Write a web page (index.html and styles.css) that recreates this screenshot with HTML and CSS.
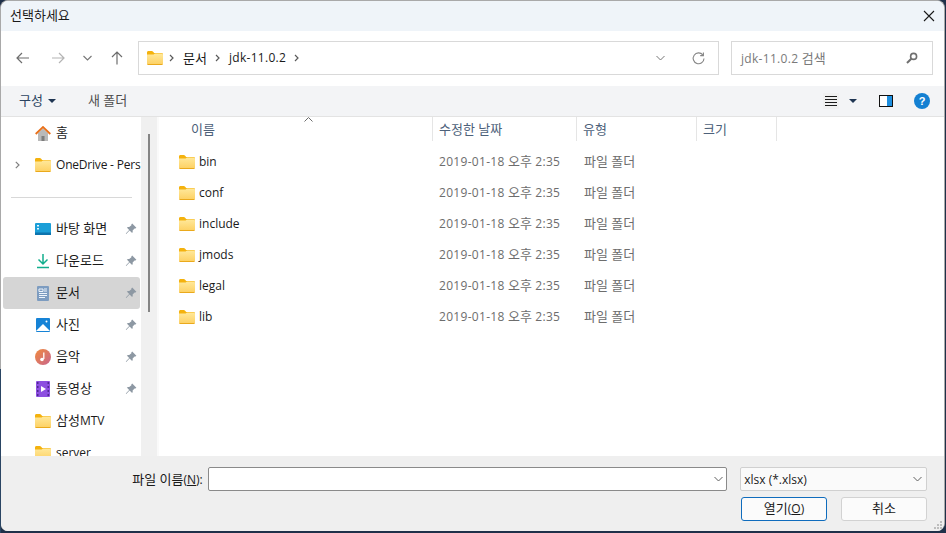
FILE: index.html
```html
<!DOCTYPE html>
<html lang="ko">
<head>
<meta charset="utf-8">
<title>선택하세요</title>
<link rel="stylesheet" href="styles.css">
</head>
<body>
<svg class="defs" width="0" height="0">
  <defs>
    <linearGradient id="fg" x1="0" y1="0" x2="0" y2="1"><stop offset="0" stop-color="#ffe89a"/><stop offset="1" stop-color="#fdd061"/></linearGradient>
    <symbol id="folder" viewBox="0 0 16 14">
      <path d="M0 1.500C0 .7.6 0 1.400 0h3.400c.5 0 .8.2 1.100.5L7.200 2H14.600c.8 0 1.400.6 1.400 1.400V6H0z" fill="#f4b20e"/>
      <path d="M0 3.400h6.600L8 2.600h6.600c.8 0 1.400.6 1.400 1.400v8.600c0 .8-.6 1.400-1.400 1.400H1.400C.6 14 0 13.400 0 12.600z" fill="url(#fg)"/>
      <path d="M0 13h16v-.4c0 .8-.6 1.400-1.400 1.400H1.400C.6 14 0 13.400 0 12.600z" fill="#eaa91c"/>
    </symbol>
    <symbol id="pin" viewBox="0 0 12 12">
      <path d="M7.200.6l4.200 4.200-1 .8-.8-.2L7.600 7.600c.3 1 .1 1.800-.5 2.400L4.600 7.400 1.200 11l-.4-.4 3.400-3.600L1.800 4.600c.6-.6 1.500-.8 2.400-.5L6.400 2.200l-.1-.8z" fill="#8d98a3"/>
    </symbol>
  </defs>
</svg>
<main class="dialog">
  <header class="titlebar">
    <span class="title">선택하세요</span>
    <svg class="close" width="12" height="12" viewBox="0 0 12 12"><path d="M1 1l10 10M11 1L1 11" stroke="#1a1a1a" stroke-width="1.100" fill="none"/></svg>
  </header>

  <nav class="navbar">
    <div class="navbtns">
      <svg width="14" height="12" viewBox="0 0 14 12"><path d="M13 6H1.200M6 1L1 6l5 5" stroke="#6d6d6d" stroke-width="1.200" fill="none"/></svg>
      <svg class="nav-fwd" width="14" height="12" viewBox="0 0 14 12"><path d="M1 6h11.800M8 1l5 5-5 5" stroke="#b4b4b4" stroke-width="1.200" fill="none"/></svg>
      <svg class="nav-down" width="9" height="6" viewBox="0 0 9 6"><path d="M.5 1l4 4 4-4" stroke="#767676" stroke-width="1.100" fill="none"/></svg>
      <svg class="nav-up" width="12" height="14" viewBox="0 0 12 14"><path d="M6 13.500V1.200M1 6l5-5 5 5" stroke="#6d6d6d" stroke-width="1.200" fill="none"/></svg>
    </div>
    <div class="address">
      <svg class="addr-folder" width="16" height="14"><use href="#folder"/></svg>
      <svg class="crumb-sep first-sep" width="5" height="8" viewBox="0 0 5 8"><path d="M1 1l3 3-3 3" stroke="#5a5a5a" stroke-width="1.200" fill="none"/></svg>
      <span class="crumb">문서</span>
      <svg class="crumb-sep" width="5" height="8" viewBox="0 0 5 8"><path d="M1 1l3 3-3 3" stroke="#5a5a5a" stroke-width="1.200" fill="none"/></svg>
      <span class="crumb en wide">jdk-11.0.2</span>
      <svg class="crumb-sep" width="5" height="8" viewBox="0 0 5 8"><path d="M1 1l3 3-3 3" stroke="#5a5a5a" stroke-width="1.200" fill="none"/></svg>
      <svg class="addr-drop" width="9" height="6" viewBox="0 0 9 6"><path d="M.5 1l4 4 4-4" stroke="#767676" stroke-width="1" fill="none"/></svg>
      <svg class="addr-refresh" width="13" height="13" viewBox="0 0 13 13"><path d="M10.800 2.900A5.400 5.400 0 1 0 12 6.500" stroke="#858585" stroke-width="1.100" fill="none"/><path d="M11.400.4v3.200H8.200" stroke="#858585" stroke-width="1.100" fill="none"/></svg>
    </div>
    <div class="search">
      <span class="search-text"><span class="en wide">jdk-11.0.2</span> 검색</span>
      <svg width="12" height="12" viewBox="0 0 12 12"><circle cx="7.600" cy="4.400" r="3" stroke="#6f6f6f" stroke-width="1.600" fill="none"/><path d="M5.300 6.700L1 11" stroke="#6f6f6f" stroke-width="2" fill="none"/></svg>
    </div>
  </nav>

  <div class="toolbar">
    <button class="tool organize"><span class="tool-text">구성</span><svg class="caret" width="8" height="4" viewBox="0 0 8 4"><path d="M0 0h8L4 4z" fill="#1f3552"/></svg></button>
    <button class="tool newfolder"><span class="tool-text">새 폴더</span></button>
    <div class="toolbar-right">
      <span class="viewbtn"><svg width="12" height="10" viewBox="0 0 12 10"><path d="M0 .5h12M0 3.500h12M0 6.500h12M0 9.500h12" stroke="#1c1c1c" stroke-width="1"/></svg></span>
      <svg class="caret view-caret" width="8" height="4" viewBox="0 0 8 4"><path d="M0 0h8L4 4z" fill="#1f3552"/></svg>
      <svg class="pane" width="14" height="12" viewBox="0 0 14 12"><rect x=".5" y=".5" width="13" height="11" fill="#fff" stroke="#111"/><rect x="8" y="1" width="5" height="10" fill="#1d8fe0"/></svg>
      <span class="help">?</span>
    </div>
  </div>

  <div class="content">
    <aside class="sidebar">
      <div class="side-item">
        <svg class="side-ico" width="16" height="15" viewBox="0 0 16 15"><path d="M3 7v8h10V7L8 2.500z" fill="#b9b9b9"/><path d="M6.500 15v-5h3v5z" fill="#7d7d7d"/><path d="M.7 8L8 1l7.300 7" stroke="#e8701a" stroke-width="1.800" fill="none"/></svg>
        <span class="label">홈</span>
      </div>
      <div class="side-item">
        <svg class="arrow" width="5" height="8" viewBox="0 0 5 8"><path d="M.8.800L4 4 .8 7.200" stroke="#808080" stroke-width="1.200" fill="none"/></svg>
        <svg class="side-ico" width="16" height="14"><use href="#folder"/></svg>
        <span class="label en tight">OneDrive - Pers</span>
      </div>
      <div class="side-sep"></div>
      <div class="side-item">
        <svg class="side-ico" width="16" height="12" viewBox="0 0 16 12"><rect width="16" height="12" rx="1" fill="#1b9fd8"/><rect y="9.500" width="16" height="2.500" fill="#0d74ae"/><path d="M2 2h2v1.500H2zM2 5h2v1.500H2z" fill="#e6f6ff"/></svg>
        <span class="label">바탕 화면</span>
        <svg class="pin" width="12" height="12"><use href="#pin"/></svg>
      </div>
      <div class="side-item">
        <svg class="side-ico" width="16" height="16" viewBox="0 0 16 16"><path d="M8 1v9.500M3.500 6.500L8 11l4.500-4.500" stroke="#12ae8d" stroke-width="1.500" fill="none"/><path d="M2 14.500h12" stroke="#12ae8d" stroke-width="1.500"/></svg>
        <span class="label">다운로드</span>
        <svg class="pin" width="12" height="12"><use href="#pin"/></svg>
      </div>
      <div class="side-item selected">
        <svg class="side-ico" width="16" height="15" viewBox="0 0 16 15"><rect x="2" y="0" width="12" height="15" rx="1" fill="#7d9cc0"/><path d="M4 3h4v2.500H4zM9 3h3M9 5h3M4 7.500h8M4 9.500h8M4 11.500h6" stroke="#eef4fb" stroke-width="1" fill="none"/></svg>
        <span class="label">문서</span>
        <svg class="pin" width="12" height="12"><use href="#pin"/></svg>
      </div>
      <div class="side-item">
        <svg class="side-ico" width="16" height="14" viewBox="0 0 16 14"><rect width="14" height="14" x="1" rx="1" fill="#1683d6"/><path d="M1 13l7-7 7 7z" fill="#fff"/><circle cx="11.500" cy="3.500" r="1" fill="#fff"/></svg>
        <span class="label">사진</span>
        <svg class="pin" width="12" height="12"><use href="#pin"/></svg>
      </div>
      <div class="side-item">
        <svg class="side-ico" width="16" height="16" viewBox="0 0 16 16"><defs><linearGradient id="mg" x1="0" y1="0" x2="1" y2="1"><stop offset="0" stop-color="#f08a3c"/><stop offset="1" stop-color="#c9658e"/></linearGradient></defs><circle cx="8" cy="8" r="8" fill="url(#mg)"/><path d="M8.800 3.500v6.500" stroke="#fff" stroke-width="1.300"/><circle cx="7" cy="10.500" r="1.800" fill="#fff"/></svg>
        <span class="label">음악</span>
        <svg class="pin" width="12" height="12"><use href="#pin"/></svg>
      </div>
      <div class="side-item">
        <svg class="side-ico" width="16" height="16" viewBox="0 0 16 16"><rect x="1" width="14" height="16" rx="1" fill="#8d4fe0"/><path d="M2 2h1.500M2 6h1.500M2 10h1.500M2 14h1.500M12.500 2H14M12.500 6H14M12.500 10H14M12.500 14H14" stroke="#3c1c78" stroke-width="1.500"/><path d="M6 5l5 3-5 3z" fill="#fff"/></svg>
        <span class="label">동영상</span>
        <svg class="pin" width="12" height="12"><use href="#pin"/></svg>
      </div>
      <div class="side-item">
        <svg class="side-ico" width="16" height="14"><use href="#folder"/></svg>
        <span class="label">삼성<span class="en">MTV</span></span>
      </div>
      <div class="side-item">
        <svg class="side-ico" width="16" height="14"><use href="#folder"/></svg>
        <span class="label en">server</span>
      </div>
    </aside>
    <div class="side-scroll"><div class="side-thumb"></div></div>
    <section class="files">
      <div class="file-head">
        <div class="col col-name">이름<svg class="sort" width="9" height="5" viewBox="0 0 9 5"><path d="M.5 4.500l4-4 4 4" stroke="#6b6b6b" stroke-width="1" fill="none"/></svg></div>
        <div class="col col-date">수정한 날짜</div>
        <div class="col col-type">유형</div>
        <div class="col col-size">크기</div>
      </div>
      <div class="file-row"><div class="cell-name"><svg width="16" height="14"><use href="#folder"/></svg><span class="en">bin</span></div><div class="cell-date"><span class="en wide">2019-01-18</span> 오후 <span class="en wide">2:35</span></div><div class="cell-type">파일 폴더</div></div>
      <div class="file-row"><div class="cell-name"><svg width="16" height="14"><use href="#folder"/></svg><span class="en">conf</span></div><div class="cell-date"><span class="en wide">2019-01-18</span> 오후 <span class="en wide">2:35</span></div><div class="cell-type">파일 폴더</div></div>
      <div class="file-row"><div class="cell-name"><svg width="16" height="14"><use href="#folder"/></svg><span class="en">include</span></div><div class="cell-date"><span class="en wide">2019-01-18</span> 오후 <span class="en wide">2:35</span></div><div class="cell-type">파일 폴더</div></div>
      <div class="file-row"><div class="cell-name"><svg width="16" height="14"><use href="#folder"/></svg><span class="en">jmods</span></div><div class="cell-date"><span class="en wide">2019-01-18</span> 오후 <span class="en wide">2:35</span></div><div class="cell-type">파일 폴더</div></div>
      <div class="file-row"><div class="cell-name"><svg width="16" height="14"><use href="#folder"/></svg><span class="en">legal</span></div><div class="cell-date"><span class="en wide">2019-01-18</span> 오후 <span class="en wide">2:35</span></div><div class="cell-type">파일 폴더</div></div>
      <div class="file-row"><div class="cell-name"><svg width="16" height="14"><use href="#folder"/></svg><span class="en">lib</span></div><div class="cell-date"><span class="en wide">2019-01-18</span> 오후 <span class="en wide">2:35</span></div><div class="cell-type">파일 폴더</div></div>
    </section>
  </div>

  <footer class="footer">
    <div class="name-row">
      <label class="name-label">파일 이름<span class="en">(<u>N</u>):</span></label>
      <div class="name-input"><svg width="9" height="6" viewBox="0 0 9 6"><path d="M.5 1l4 4 4-4" stroke="#606060" stroke-width="1" fill="none"/></svg></div>
      <div class="type-select"><span class="en">xlsx (*.xlsx)</span><svg width="9" height="6" viewBox="0 0 9 6"><path d="M.5 1l4 4 4-4" stroke="#606060" stroke-width="1" fill="none"/></svg></div>
    </div>
    <div class="btn-row">
      <button class="btn primary">열기<span class="en">(<u>O</u>)</span></button>
      <button class="btn">취소</button>
    </div>
    <svg class="grip" width="10" height="10" viewBox="0 0 10 10"><path d="M7 1h2v2H7zM4 4h2v2H4zM7 4h2v2H7zM1 7h2v2H1zM4 7h2v2H4zM7 7h2v2H7z" fill="#bdbdbd"/></svg>
  </footer>
</main>
</body>
</html>
```

FILE: styles.css
```css
* { box-sizing: border-box; }
html, body { margin: 0; padding: 0; height: 100%; }
body {
  width: 946px; height: 533px; overflow: hidden;
  background: #1f3049;
  font-family: "Open Sans", "Noto Sans CJK KR", sans-serif;
  font-size: 13px; color: #1a1a1a;
  position: relative;
}
body::after {
  content: ""; position: absolute; left: 0; top: 369px; bottom: 0; width: 1px;
  background: #2a4563;
}
.en { font-size: 12px; }
.wide { letter-spacing: .3px; }
.tight { letter-spacing: -.2px; }
.defs { position: absolute; }
svg { display: block; flex: none; }
.dialog {
  width: 945px; height: 531px;
  border: 1px solid #a9a9a9; border-bottom: 0;
  border-radius: 8px;
  overflow: hidden; display: flex; flex-direction: column;
  background: #fff;
}
.titlebar {
  height: 30px; background: #eff4f9; flex: none;
  display: flex; align-items: center; justify-content: space-between;
  padding: 0 9px 0 9px;
}
.title { padding-bottom: 3px; }
.navbar { height: 55px; flex: none; display: flex; align-items: center; padding: 0 0 1px 15px; background: #fff; }
.navbtns { width: 122px; display: flex; align-items: center; }
.nav-fwd { margin-left: 21px; }
.nav-down { margin-left: 18px; }
.nav-up { margin-left: 19px; }
.address {
  width: 581px; height: 34px; border: 1px solid #d9d9d9; background: #fff;
  display: flex; align-items: center; padding-left: 8px;
}
.crumb { padding-bottom: 2px; }
.crumb-sep { margin: 0 9px 0 8px; }
.first-sep { margin-left: 6px; }
.addr-drop { margin-left: auto; }
.addr-refresh { margin: 0 13px 0 27px; }
.search {
  width: 202px; height: 34px; margin-left: 12px; border: 1px solid #d9d9d9;
  display: flex; align-items: center; justify-content: space-between;
  padding: 0 14px 0 9px; color: #7a7a7a;
}
.search-text { padding-bottom: 2px; }
.toolbar {
  height: 31px; flex: none; background: #f3f4f6; border-bottom: 1px solid #e3e3e3;
  display: flex; align-items: center; padding: 0 0 0 18px;
}
.tool { border: 0; background: none; padding: 0; font: inherit; color: #2b4360; display: flex; align-items: center; }
.tool-text { padding-bottom: 3px; }
.caret { margin-left: 5px; }
.newfolder { margin-left: 32px; color: #4d4d4d; }
.toolbar-right { margin-left: auto; display: flex; align-items: center; padding-right: 14px; }
.viewbtn { width: 16px; height: 16px; background: #f0f0f0; display: flex; align-items: center; justify-content: center; }
.view-caret { margin-left: 10px; }
.pane { margin-left: 22px; }
.help {
  width: 16px; height: 16px; margin-left: 21px; border-radius: 50%; background: #1480d2;
  color: #fff; font: bold 11px/16px "Liberation Sans", sans-serif; text-align: center;
}
.content { flex: 1; min-height: 0; display: flex; }
.sidebar { width: 140px; flex: none; overflow: hidden; padding: 0 0 0 2px; background: #fff; }
.side-item {
  height: 32px; display: flex; align-items: center; position: relative;
  padding-left: 32px; white-space: nowrap; margin-right: 1px; flex: none;
}
.label { margin-left: 5px; padding-bottom: 3px; }
.label.en { padding-bottom: 2px; }
.side-ico { width: 16px; }
.arrow { position: absolute; left: 12px; top: 12px; }
.pin { margin-left: auto; margin-right: 3px; }
.selected { background: #d5d5d5; border-radius: 3px; }
.side-sep { height: 1px; background: #d8d8d8; margin: 16px 9px 15px 8px; }
.side-scroll { width: 16px; flex: none; background: #f0f0f0; padding: 17px 0 0 7px; }
.side-thumb { width: 2px; height: 178px; background: #858585; }
.files { flex: 1; border-left: 2px solid #fafafa; background: #fff; min-width: 0; }
.file-head { height: 24px; display: flex; color: #4d617a; margin-bottom: 5px; }
.col { border-right: 1px solid #e5e5e5; padding: 2px 0 0 6px; position: relative; }
.col-name { width: 274px; padding-left: 32px; }
.col-date { width: 144px; }
.col-type { width: 120px; }
.col-size { width: 80px; }
.sort { position: absolute; left: 145px; top: 0; }
.file-row { height: 31px; display: flex; align-items: center; }
.cell-name { width: 274px; display: flex; align-items: center; padding-left: 20px; gap: 4px; }
.cell-date { width: 144px; padding: 0 0 2px 6px; color: #6d6d6d; }
.cell-type { padding: 0 0 2px 7px; color: #6d6d6d; }
.footer { height: 75px; flex: none; background: #efefef; padding: 11px 17px 0 0; position: relative; }
.name-row { display: flex; align-items: center; height: 24px; }
.name-label { width: 207px; text-align: right; padding: 0 5px 2px 0; }
.name-input {
  width: 520px; height: 24px; background: #fff; border: 1px solid #8a8a8a; border-radius: 2px;
  display: flex; align-items: center; justify-content: flex-end; padding-right: 3px;
}
.type-select {
  width: 187px; height: 24px; margin-left: 13px; background: #fafafa; border: 1px solid #d0d0d0; border-radius: 2px;
  display: flex; align-items: center; justify-content: space-between; padding: 0 4px 0 3px;
}
.btn-row { display: flex; justify-content: flex-end; gap: 14px; margin-top: 6px; }
.btn {
  width: 86px; height: 24px; padding: 0 0 3px; font: inherit; color: #1a1a1a; background: #fbfbfb;
  border: 1px solid #d2d2d2; border-radius: 3px;
}
.primary { border-color: #0f6cbd; }
.grip { position: absolute; right: 1px; bottom: 1px; }
```
